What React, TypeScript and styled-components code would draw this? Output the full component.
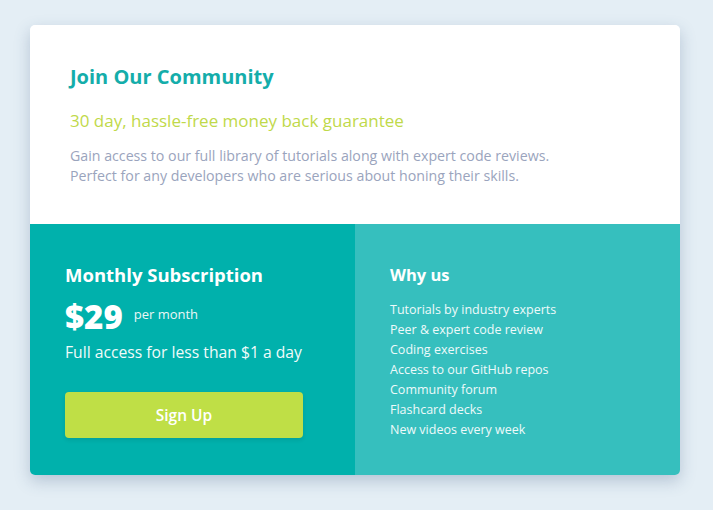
import React from "react";
import styled, { createGlobalStyle } from "styled-components";

const GlobalStyle = createGlobalStyle`
  html, body {
    margin: 0;
    padding: 0;
    background: #e4eef5;
    font-family: 'Open Sans', sans-serif;
  }
  * { box-sizing: border-box; }
`;

const Page = styled.div`
  width: 713px;
  height: 510px;
  padding-top: 25px;
  padding-left: 30px;
`;

const Card = styled.div`
  width: 650px;
  border-radius: 5px;
  box-shadow: 0 6px 16px rgba(60, 90, 130, 0.28);
  overflow: hidden;
`;

const Top = styled.section`
  background: #ffffff;
  padding: 39px 40px 37px;
  height: 199px;
`;

const Title = styled.h1`
  margin: 0;
  color: #14adaa;
  font-size: 20px;
  font-weight: 700;
  line-height: 26px;
`;

const Guarantee = styled.p`
  margin: 20px 0 0;
  color: #bfd94a;
  font-size: 17px;
  line-height: 22px;
`;

const Body = styled.p`
  margin: 14px 0 0;
  color: #9aa4bd;
  font-size: 14.2px;
  line-height: 20px;
`;

const Bottom = styled.div`
  display: grid;
  grid-template-columns: 325px 325px;
  height: 251px;
`;

const Column = styled.section<{ $bg: string }>`
  background: ${(p) => p.$bg};
  padding: 39px 35px;
  color: #ffffff;
`;

const ColTitle = styled.h2<{ $size: number }>`
  margin: 0;
  font-size: ${(p) => p.$size}px;
  font-weight: 700;
  line-height: 24px;
`;

const PriceRow = styled.div`
  display: flex;
  align-items: center;
  gap: 11px;
  margin-top: 12px;
`;

const Price = styled.span`
  font-size: 33px;
  font-weight: 800;
  line-height: 36px;
`;

const Per = styled.span`
  font-size: 13px;
  color: #eaf7f6;
  margin-top: -6px;
`;

const Access = styled.p`
  margin: 7px 0 0;
  font-size: 15.7px;
  line-height: 20px;
  color: #f0fbfa;
`;

const Button = styled.button`
  display: block;
  width: 238px;
  height: 46px;
  margin-top: 30px;
  border: none;
  border-radius: 4px;
  background: #bfdf46;
  color: #ffffff;
  font-family: inherit;
  font-size: 15.5px;
  font-weight: 600;
  box-shadow: 0 2px 4px rgba(0, 0, 0, 0.1);
  cursor: pointer;
`;

const List = styled.ul`
  list-style: none;
  margin: 13px 0 0;
  padding: 0;
`;

const Item = styled.li`
  font-size: 12.5px;
  line-height: 20px;
  color: #eefafa;
`;

const reasons = [
  "Tutorials by industry experts",
  "Peer & expert code review",
  "Coding exercises",
  "Access to our GitHub repos",
  "Community forum",
  "Flashcard decks",
  "New videos every week",
];

const App = () => {
  return (
    <>
      <GlobalStyle />
      <Page>
        <Card>
          <Top>
            <Title>Join Our Community</Title>
            <Guarantee>30 day, hassle-free money back guarantee</Guarantee>
            <Body>
              Gain access to our full library of tutorials along with expert code reviews.
              <br />
              Perfect for any developers who are serious about honing their skills.
            </Body>
          </Top>
          <Bottom>
            <Column $bg="#00b1ac">
              <ColTitle $size={18.5}>Monthly Subscription</ColTitle>
              <PriceRow>
                <Price>$29</Price>
                <Per>per month</Per>
              </PriceRow>
              <Access>Full access for less than $1 a day</Access>
              <Button>Sign Up</Button>
            </Column>
            <Column $bg="#36bfbe">
              <ColTitle $size={16.5}>Why us</ColTitle>
              <List>
                {reasons.map((r) => (
                  <Item key={r}>{r}</Item>
                ))}
              </List>
            </Column>
          </Bottom>
        </Card>
      </Page>
    </>
  );
};

export default App;
